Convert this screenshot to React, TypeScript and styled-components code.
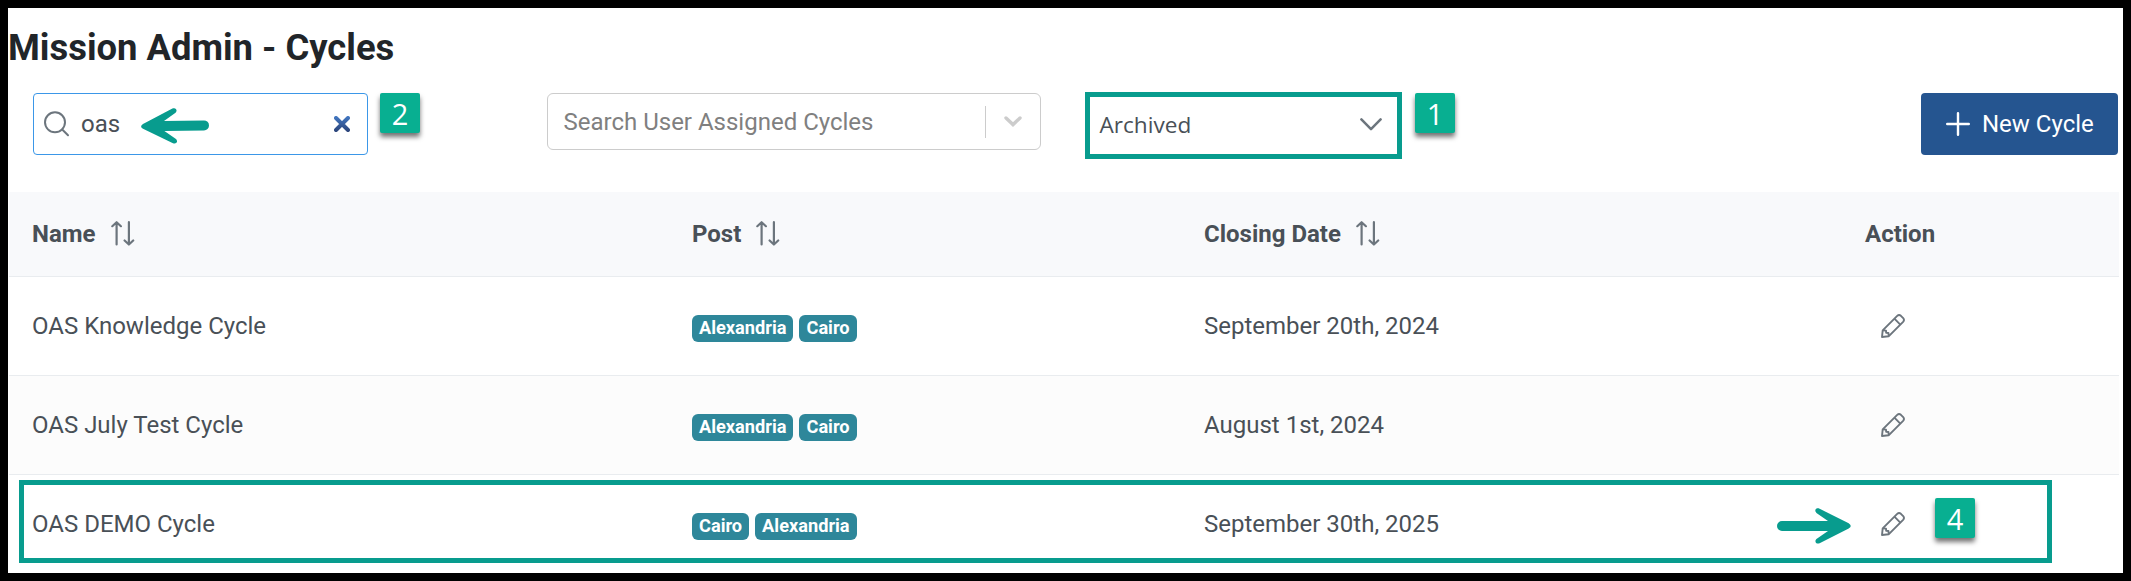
import React from "react";
import styled, { createGlobalStyle } from "styled-components";

const Global = createGlobalStyle`
  * { box-sizing: border-box; }
  body { margin: 0; background: #fff; font-family: Roboto, "Liberation Sans", sans-serif; font-size: 24px; color: #495057; }
  svg { display: block; flex: none; }
`;

const Frame = styled.main`
  position: relative;
  width: 2131px;
  height: 581px;
  border: 8px solid #000;
  background: #fff;
  overflow: hidden;
`;

const Title = styled.h1`
  margin: 0;
  padding: 17px 0 0 0;
  height: 85px;
  font-size: 36.4px;
  line-height: 46px;
  font-weight: 700;
  color: #212529;
  white-space: nowrap;
`;

const Toolbar = styled.div`
  display: flex;
  align-items: flex-start;
  height: 99px;
  padding: 0 5px 0 25px;
`;

const SearchBox = styled.label`
  display: flex;
  align-items: center;
  width: 335px;
  height: 62px;
  padding: 0 17px 0 10px;
  border: 1px solid #3b97e8;
  border-radius: 4px;
`;

const SearchText = styled.span`
  margin-left: 11px;
  width: 60px;
  line-height: 28px;
`;

const ClearIcon = styled.svg`
  margin-left: auto;
`;

const Badge = styled.span<{ $left?: number }>`
  flex: none;
  display: flex;
  align-items: center;
  justify-content: center;
  width: 40px;
  height: 40px;
  margin-left: ${(p) => p.$left ?? 0}px;
  padding-top: 1px;
  border-radius: 2px;
  background: #08af91;
  color: #fff;
  font-family: "Open Sans", sans-serif;
  font-size: 29px;
  font-weight: 500;
  line-height: 40px;
  box-shadow: 0 4px 5px rgba(0, 0, 0, 0.55);
`;

const UserSelect = styled.div`
  display: flex;
  align-items: center;
  width: 494px;
  height: 57px;
  margin-left: 127px;
  padding: 0 18px 0 15.5px;
  border: 1px solid #ccc;
  border-radius: 6px;
  color: #808080;
`;

const Separator = styled.span`
  width: 1px;
  height: 32px;
  margin-left: auto;
  margin-right: 18px;
  background: #ccc;
`;

const StatusSelect = styled.div`
  display: flex;
  align-items: center;
  justify-content: space-between;
  width: 317px;
  height: 67px;
  margin: -1px 0 0 44px;
  padding: 0 15px 2px 9.5px;
  border: 5px solid #089c8e;
  font-family: "Open Sans", sans-serif;
  font-size: 22.6px;
`;

const NewButton = styled.button`
  display: flex;
  align-items: center;
  gap: 12px;
  width: 197px;
  height: 62px;
  margin-left: auto;
  padding: 0 0 0 25px;
  border: 0;
  border-radius: 4px;
  background: #255590;
  color: #fff;
  font: 400 24px Roboto, sans-serif;
  white-space: nowrap;
`;

const Table = styled.section`
  margin: 0 4px 0 1px;
`;

const Row = styled.div<{ $head?: boolean; $striped?: boolean }>`
  display: grid;
  grid-template-columns: 660px 512px 661px 1fr;
  align-items: center;
  height: ${(p) => (p.$head ? 85 : 99)}px;
  padding-left: 23px;
  border-bottom: 1px solid #e9ecef;
  background: ${(p) => (p.$head ? "#f8f9fb" : p.$striped ? "#fcfcfc" : "#fff")};
  font-weight: ${(p) => (p.$head ? 700 : 400)};
`;

const Cell = styled.div`
  display: flex;
  align-items: center;
  white-space: nowrap;
`;

const HeadCell = styled(Cell)`
  gap: 15px;
`;

const Tags = styled(Cell)`
  gap: 6px;
  padding-top: 5px;
`;

const Tag = styled.span`
  height: 27px;
  padding: 0 7px;
  border-radius: 6px;
  background: #2e879a;
  color: #fff;
  font-size: 18.2px;
  line-height: 26px;
  font-weight: 700;
`;

const ActionCell = styled(Cell)`
  padding-left: 16px;
`;

const RowOutline = styled.div`
  position: absolute;
  left: 11px;
  top: 472px;
  width: 2033px;
  height: 83px;
  border: 5px solid #089c8e;
`;

const Callout = styled.div<{ $x: number; $y: number }>`
  position: absolute;
  left: ${(p) => p.$x}px;
  top: ${(p) => p.$y}px;
`;

const SearchIcon = () => (
  <svg width="26" height="26" viewBox="0 0 26 26" fill="none" stroke="#6c757d" strokeWidth="2" strokeLinecap="round">
    <circle cx="11" cy="11.3" r="10" />
    <path d="M18.2 18.5 24 24.2" />
  </svg>
);

const SortIcon = () => (
  <svg width="24" height="26" viewBox="0 0 24 26" fill="none" stroke="#6c757d" strokeWidth="2.2" strokeLinecap="round" strokeLinejoin="round">
    <path d="M5.6 23.5V1.5M1.3 5.2 5.6 1.2 9.9 5.2M17.9 1.2v22M13.6 19.5 17.9 23.5 22.2 19.5" />
  </svg>
);

const PencilIcon = () => (
  <svg width="24" height="24" viewBox="0 0 24 24" fill="none" stroke="#6c757d" strokeWidth="1.9" strokeLinejoin="round">
    <path d="M1 23 1.7 16.4 16.2 1.9Q18 .2 19.9 1.8L22.2 4.1Q23.8 6 22.1 7.8L7.6 22.3Z" />
    <path d="M13.4 4.7 19.3 10.6M1.9 16.2 5 16.6 5.2 18.8 7.4 19 7.8 22" />
  </svg>
);

const RightArrow = () => (
  <svg width="74" height="36" viewBox="0 0 74 36" fill="#089c8e">
    <path d="M5 13H51L39.8 5.2C36.5 2.4 39.2-.8 42.6.7L71.7 15.2Q75.8 18 71.7 20.5L42.6 35.2C39.2 36.6 36.8 33.2 39.8 30.8L51 23H5A5 5 0 0 1 5 13Z" />
  </svg>
);

const LeftArrow = () => (
  <svg width="68" height="36" viewBox="0 0 68 36" fill="#089c8e">
    <path d="M63 12.4 23 12.9 34.2 5C37.2 2.4 34.8-1 31.4.6L2 16Q-1.8 18.4 2 20.7L32 35.2C35.5 36.6 37.6 33 34.6 30.7L23.4 23 63 22.4A5 5 0 0 0 63 12.4Z" />
  </svg>
);

const rows = [
  { name: "OAS Knowledge Cycle", posts: ["Alexandria", "Cairo"], date: "September 20th, 2024" },
  { name: "OAS July Test Cycle", posts: ["Alexandria", "Cairo"], date: "August 1st, 2024" },
  { name: "OAS DEMO Cycle", posts: ["Cairo", "Alexandria"], date: "September 30th, 2025" },
];

export default function App() {
  return (
    <Frame>
      <Global />
      <Title>Mission Admin - Cycles</Title>
      <Toolbar>
        <SearchBox>
          <SearchIcon />
          <SearchText>oas</SearchText>
          <ClearIcon width="16" height="16" viewBox="0 0 16 16">
            <defs>
              <linearGradient id="clear" x1="0" y1="0" x2="0" y2="16" gradientUnits="userSpaceOnUse">
                <stop stopColor="#4379c4" />
                <stop offset="1" stopColor="#2a4277" />
              </linearGradient>
            </defs>
            <path d="M2 2 14 14M14 2 2 14" stroke="url(#clear)" strokeWidth="4" strokeLinecap="round" />
          </ClearIcon>
        </SearchBox>
        <Badge $left={12}>2</Badge>
        <UserSelect>
          Search User Assigned Cycles
          <Separator />
          <svg width="18" height="11" viewBox="0 0 18 11" fill="none" stroke="#ccc" strokeWidth="3.4" strokeLinecap="round">
            <path d="M2 2 9 8.6 16 2" />
          </svg>
        </UserSelect>
        <StatusSelect>
          Archived
          <svg width="22" height="13" viewBox="0 0 22 13" fill="none" stroke="#6c757d" strokeWidth="2.5" strokeLinecap="round" strokeLinejoin="round">
            <path d="M1.4 1.4 11 11.2 20.6 1.4" />
          </svg>
        </StatusSelect>
        <Badge $left={13}>1</Badge>
        <NewButton>
          <svg width="24" height="24" viewBox="0 0 24 24" stroke="#fff" strokeWidth="2.4" strokeLinecap="round">
            <path d="M12 1.2V22.8M1.2 12H22.8" />
          </svg>
          New Cycle
        </NewButton>
      </Toolbar>
      <Table>
        <Row $head>
          <HeadCell>Name <SortIcon /></HeadCell>
          <HeadCell>Post <SortIcon /></HeadCell>
          <HeadCell>Closing Date <SortIcon /></HeadCell>
          <HeadCell>Action</HeadCell>
        </Row>
        {rows.map((r, i) => (
          <Row key={r.name} $striped={i === 1}>
            <Cell>{r.name}</Cell>
            <Tags>{r.posts.map((p) => <Tag key={p}>{p}</Tag>)}</Tags>
            <Cell>{r.date}</Cell>
            <ActionCell><PencilIcon /></ActionCell>
          </Row>
        ))}
      </Table>
      <RowOutline />
      <Callout $x={133} $y={100}><LeftArrow /></Callout>
      <Callout $x={1769} $y={500}><RightArrow /></Callout>
      <Callout $x={1927} $y={490}><Badge>4</Badge></Callout>
    </Frame>
  );
}
